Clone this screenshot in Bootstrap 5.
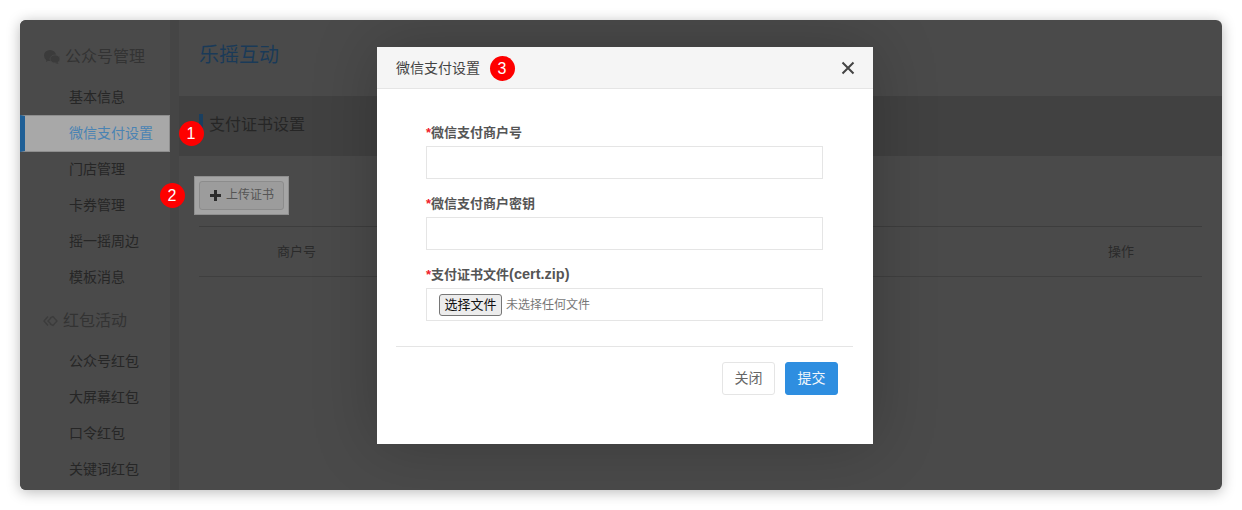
<!DOCTYPE html>
<html lang="zh">
<head>
<meta charset="utf-8">
<title>微信支付设置</title>
<link href="https://cdn.jsdelivr.net/npm/bootstrap@5.3.0/dist/css/bootstrap.min.css" rel="stylesheet">
<style>
html,body{height:510px;overflow:hidden;background:#fff;font-family:"Liberation Sans","Noto Sans CJK SC",sans-serif;}
.shot-window{position:relative;margin:20px 20px 0;height:470px;width:1202px;background:#4a4a4a;border-radius:6px;overflow:hidden;}
.shot-shadow{position:absolute;left:20px;top:20px;width:1202px;height:470px;border-radius:6px;box-shadow:0 2px 14px rgba(0,0,0,.28);}
.side-col{width:159px;flex:none;height:470px;background:#4a4a4a;border-right:9px solid #454545;overflow:hidden;color:#2a2a2a;}
.side-head{font-size:16px;line-height:24px;color:#333;display:flex;align-items:center;}
.side-head.first{padding:15px 0 0 24px;height:59px;}
.side-head.second{padding:0 0 0 23px;height:36px;margin-top:8px;margin-bottom:4px;}
.head-ico{flex:none;margin-right:5px;}
.side-link{display:block;height:36px;line-height:36px;font-size:14px;padding-left:49px;color:#262626;text-decoration:none;}
.side-link.on{height:37px;line-height:35px;margin-bottom:-1px;background:#a8a8a8;color:#4a83b3;border:1px solid #8e8e8e;border-left:5px solid #1f5f96;padding-left:44px;position:relative;}
.main-col{min-width:0;height:470px;}
.brand-title{font-size:20px;line-height:28px;color:#1a3a58;margin:0;padding:21px 0 0 20px;height:76px;font-weight:400;}
.band{height:60px;background:#414141;display:flex;align-items:center;padding-left:20px;}
.band-title{font-size:16px;line-height:22px;color:#262626;border-left:4px solid #1a3f5f;padding-left:6px;margin:0;font-weight:400;position:relative;top:-1px;}
.tool-zone{padding:20px 20px 0 15px;height:70px;}
.tool-hi{display:inline-block;background:#a5a5a5;border:1px solid #8f8f8f;padding:4px;height:39px;}
.up-btn{width:85px;height:29px;padding:0 0 0 1px;font-size:12px;line-height:27px;background:#9c9c9c;border:1px solid #8c8c8c;border-radius:3px;color:#555;display:flex;align-items:center;justify-content:center;gap:5px;}
.up-btn svg{width:11px;height:11px;}
.cert-table{margin:0 20px;height:51px;border-top:1px solid #3d3d3d;border-bottom:1px solid #3f3f3f;font-size:13px;color:#2a2a2a;display:flex;align-items:center;justify-content:space-between;padding:0 68px 0 78px;width:1003px;}
.num-dot{position:absolute;width:25px;height:25px;border-radius:50%;background:#fe0000;color:#fff;font-size:16px;line-height:25px;text-align:center;font-family:"Liberation Sans",sans-serif;z-index:3;}
.dot-a{left:158.5px;top:100.5px;}
.dot-b{left:139.5px;top:162.5px;}
.dot-c{left:112.5px;top:8.500px;}
.dlg{position:absolute;left:357px;top:27px;width:496px;height:397px;border-radius:0;border:0;box-shadow:0 0 60px rgba(0,0,0,.22);background:#fff;z-index:2;}
.dlg .modal-header{height:42px;padding:0 18px 0 19px;background:#f5f5f5;border-bottom:1px solid #e5e5e5;border-radius:0;}
.dlg-title{font-size:14px;line-height:20px;color:#444;font-weight:400;margin:0;}
.dlg-x{background:none;border:0;padding:0;width:14px;height:14px;display:flex;}
.dlg-body{padding:34px 50px 0 49px;}
.fld{height:71px;}
.fld label{display:block;font-size:13px;line-height:19px;font-weight:700;color:#555;margin:0 0 4px;height:19px;}
.fld label i{color:#f0202a;font-style:normal;}
.fld label b{font-size:14.500px;}
.dlg .form-control{height:33px;border-radius:0;border:1px solid #e5e5e5;padding:0 12px;}
.file-box{height:33px;border:1px solid #e5e5e5;display:flex;align-items:center;padding-left:12px;gap:4px;width:397px;}
.file-pick{height:22px;width:63px;padding:0;font-size:13px;line-height:20px;color:#111;background:#ececec;border:1px solid #767676;border-radius:3px;}
.file-none{font-size:12px;color:#777;}
.dlg-rule{margin:10px 20px 0 19px;border:0;border-top:1px solid #e5e5e5;opacity:1;}
.dlg-foot{padding:15px 35px 0 0;display:flex;justify-content:flex-end;gap:10px;}
.foot-btn{width:53px;height:33px;padding:0;font-size:14px;line-height:31px;border-radius:3px;}
.foot-close{background:#fff;border:1px solid #e5e5e5;color:#666;}
.foot-send{background:#2e8ee0;border:1px solid #2e8ee0;color:#f2f7fc;}
</style>
</head>
<body>
<div class="shot-shadow"></div>
<div class="shot-window d-flex">
  <aside class="side-col">
    <div class="side-head first">
      <svg width="16" height="14" viewBox="0 0 16 14" class="head-ico" fill="#3b3b3b"><ellipse cx="6" cy="5.500" rx="6" ry="5.500"/><path d="M2.500 9 2 12l3.500-2z"/><ellipse cx="11" cy="9" rx="5" ry="4" stroke="#4a4a4a" stroke-width=".8"/><path d="M13.500 12 14.500 14 11 13z"/></svg>
      <span>公众号管理</span>
    </div>
    <a class="side-link" href="#">基本信息</a>
    <a class="side-link on" href="#">微信支付设置</a>
    <a class="side-link" href="#">门店管理</a>
    <a class="side-link" href="#">卡券管理</a>
    <a class="side-link" href="#">摇一摇周边</a>
    <a class="side-link" href="#">模板消息</a>
    <div class="side-head second">
      <svg width="15" height="12" viewBox="0 0 15 12" class="head-ico" fill="none" stroke="#3c3c3c" stroke-width="1.400"><path d="M5 1.500 1 6l4 4.500"/><path d="M8 3 5 6l3 3"/><path d="M7 3l3-1.500L14 6l-4 4.500L7 9"/></svg>
      <span>红包活动</span>
    </div>
    <a class="side-link" href="#">公众号红包</a>
    <a class="side-link" href="#">大屏幕红包</a>
    <a class="side-link" href="#">口令红包</a>
    <a class="side-link" href="#">关键词红包</a>
  </aside>
  <main class="main-col flex-grow-1">
    <h1 class="brand-title">乐摇互动</h1>
    <div class="band"><h2 class="band-title">支付证书设置</h2></div>
    <div class="tool-zone">
      <div class="tool-hi">
        <button type="button" class="btn up-btn">
          <svg viewBox="0 0 11 11" fill="#2c2c2c"><path d="M4 0h3v4h4v3H7v4H4V7H0V4h4z"/></svg>
          <span>上传证书</span>
        </button>
      </div>
    </div>
    <div class="cert-table"><span>商户号</span><span>操作</span></div>
  </main>
  <span class="num-dot dot-a">1</span>
  <span class="num-dot dot-b">2</span>
  <div class="modal-content dlg">
    <div class="modal-header">
      <h5 class="dlg-title">微信支付设置</h5>
      <button type="button" class="dlg-x ms-auto" aria-label="关闭">
        <svg width="14" height="14" viewBox="0 0 14 14" stroke="#444" stroke-width="2" fill="none"><path d="M1.500 1.500l11 11M12.500 1.500l-11 11"/></svg>
      </button>
    </div>
    <span class="num-dot dot-c">3</span>
    <form class="dlg-body">
      <div class="fld">
        <label><i>*</i>微信支付商户号</label>
        <input type="text" class="form-control">
      </div>
      <div class="fld">
        <label><i>*</i>微信支付商户密钥</label>
        <input type="text" class="form-control">
      </div>
      <div class="fld">
        <label><i>*</i>支付证书文件<b>(cert.zip)</b></label>
        <div class="file-box"><button type="button" class="file-pick">选择文件</button><span class="file-none">未选择任何文件</span></div>
      </div>
    </form>
    <hr class="dlg-rule">
    <div class="dlg-foot">
      <button type="button" class="btn foot-btn foot-close">关闭</button>
      <button type="button" class="btn foot-btn foot-send">提交</button>
    </div>
  </div>
</div>
<script src="https://cdn.jsdelivr.net/npm/bootstrap@5.3.0/dist/js/bootstrap.bundle.min.js"></script>
</body>
</html>
